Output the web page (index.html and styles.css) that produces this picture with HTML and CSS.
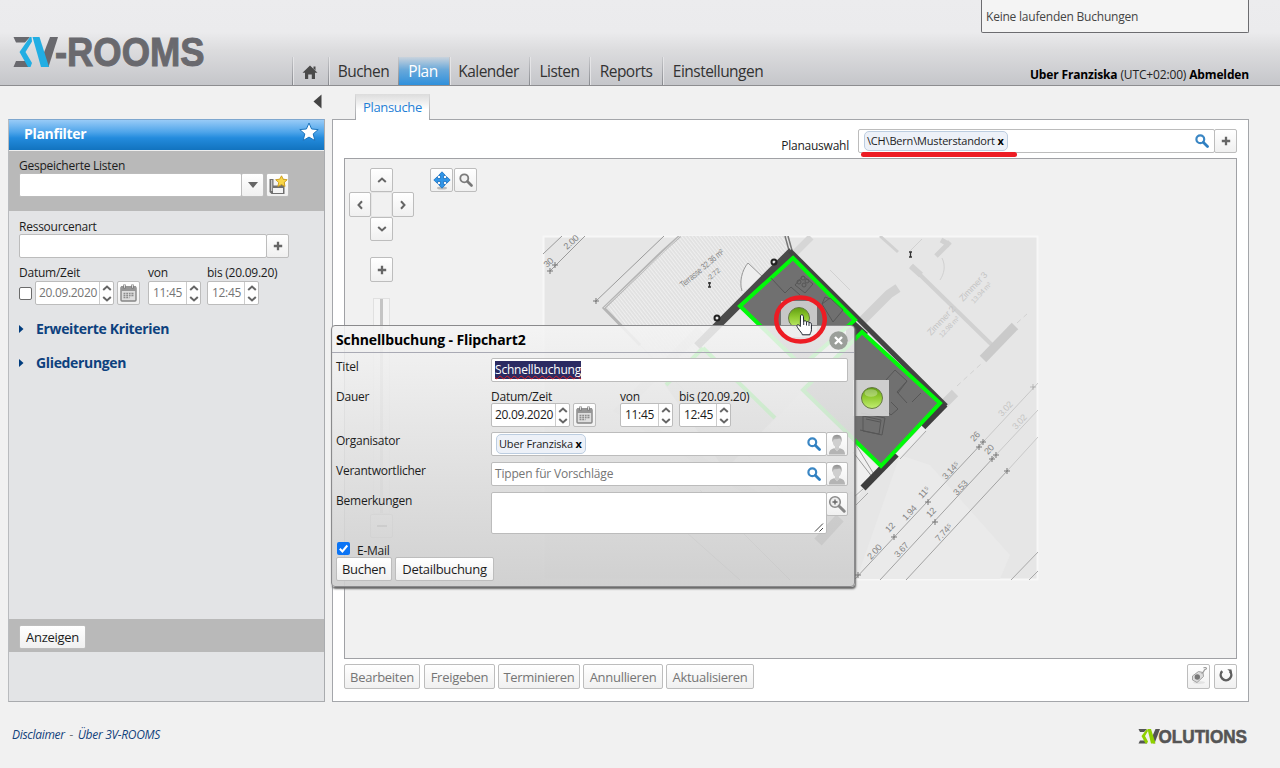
FILE: index.html
```html
<!DOCTYPE html>
<html lang="de">
<head>
<meta charset="utf-8">
<title>3V-ROOMS</title>
<link rel="stylesheet" href="styles.css">
</head>
<body>
<svg class="defs" width="0" height="0">
  <defs>
    <linearGradient id="pinG" x1="0" y1="0" x2="0" y2="1"><stop offset="0" stop-color="#5f9c10"/><stop offset=".45" stop-color="#8fc92f"/><stop offset="1" stop-color="#c2ee72"/></linearGradient>
    <linearGradient id="perG" x1="0" y1="0" x2="0" y2="1"><stop offset="0" stop-color="#909090"/><stop offset="1" stop-color="#c9c9c9"/></linearGradient>
    <symbol id="plus" viewBox="0 0 10 10"><path d="M5 .8v8.400M.8 5h8.400" stroke="#666" stroke-width="2.300"/></symbol>
    <symbol id="chev" viewBox="0 0 10 6"><path d="M1.200 5 5 1.500 8.800 5" fill="none" stroke="#666" stroke-width="2"/></symbol>
    <symbol id="lens" viewBox="0 0 14 14"><circle cx="5.300" cy="5.300" r="3.900" fill="#fff" stroke="#3a86c4" stroke-width="2.200"/><path d="M8.500 8.500l4 4" stroke="#2f7fc1" stroke-width="2.800" stroke-linecap="round"/></symbol>
    <symbol id="lensgrey" viewBox="0 0 14 14"><circle cx="5.300" cy="5.300" r="4" fill="#f2f2f2" stroke="#7c7c7c" stroke-width="1.800"/><path d="M8.500 8.500l4 4" stroke="#777" stroke-width="2.600" stroke-linecap="round"/></symbol>
    <symbol id="cal" viewBox="0 0 17 18"><rect x="1" y="3" width="15" height="14" rx="1" fill="#dedede" stroke="#858585" stroke-width="1.400"/><rect x="1" y="2" width="15" height="5" fill="#969696"/><path d="M4.500.5v4M12.500.5v4" stroke="#777" stroke-width="2.400"/><path d="M4.500.8v3M12.500.8v3" stroke="#ddd"/><path d="M3.500 9.500h10M3.500 11.500h10M3.500 13.500h6" stroke="#8d8d8d" stroke-width="1.400"/><path d="M5.800 8.500v6M8.500 8.500v6M11 8.500v4" stroke="#ececec" stroke-width=".7"/></symbol>
    <symbol id="person" viewBox="0 0 18 21"><path d="M1 20.500c0-4 2-5.500 5.500-6.200L9 17l2.500-2.700c3.500.7 5.500 2.200 5.500 6.200z" fill="#b4b4b4"/><path d="M7 12h4v3l-2 2.400-2-2.400z" fill="#ccc"/><ellipse cx="9" cy="7.500" rx="4.300" ry="5.500" fill="#cfcfcf"/><path d="M4.300 8.500C3.500 3.500 5.500.8 9 .8s5.600 2.700 4.700 7.700C13 6 12.500 5 11.500 4.600 9 5.800 6.500 5 5.600 5.800 5 6.500 4.900 7.500 4.300 8.500z" fill="url(#perG)"/></symbol>
  </defs>
</svg>

<header class="top">
  <svg class="logo" width="196" height="40" viewBox="0 0 196 40">
    <path d="M1.500 5H18L13 10.500H4zM1.500 35H18l-4-6H4z" fill="#69696e"/>
    <path d="M19.500 5H18L7.500 20 16 35h2.500l1.500-4-6.500-11L20 9.500z" fill="#22aee3"/>
    <path d="M38 5h8L36.500 35h-3L32 20.500z" fill="#69696e"/>
    <path d="M20.500 5h7L37 35h-8z" fill="#22aee3"/>
    <text x="43" y="34.300" textLength="149.500" lengthAdjust="spacingAndGlyphs" class="logotype">-ROOMS</text>
  </svg>
  <nav class="nav">
    <a class="home"><svg width="16" height="15" viewBox="0 0 16 15"><path d="M8 .5l7.500 7.300H13V14H9.800V9.500H6.200V14H3V7.800H.5L8 .5z" fill="#4a4a4a"/><path d="M11.500 1.500h2v4l-2-2z" fill="#4a4a4a"/></svg></a>
    <a class="n1">Buchen</a><a class="n2 on">Plan</a><a class="n3">Kalender</a><a class="n4">Listen</a><a class="n5">Reports</a><a class="n6">Einstellungen</a>
  </nav>
  <div class="user"><b>Uber Franziska</b> (UTC+02:00) <b>Abmelden</b></div>
  <div class="running">Keine laufenden Buchungen</div>
</header>

<main class="main">
  <aside class="left">
    <div class="fold"><svg width="9" height="15" viewBox="0 0 9 15"><path d="M8.500.5v14L.5 7.500z" fill="#444"/></svg></div>
    <section class="filter">
      <h2 class="bar">Planfilter<svg width="20" height="20" viewBox="0 0 20 20"><path d="M10 1l2.600 6 6.600.6-5 4.300 1.600 6.600L10 15.100l-5.800 3.400L5.800 11.900.8 7.600 7.400 7z" fill="#fff" stroke="#1b74bd" stroke-width="1"/></svg></h2>
      <div class="saved">
        <label class="lbl">Gespeicherte Listen</label>
        <div class="row">
          <span class="inp w223"></span><span class="btn sq"><svg width="10" height="6"><path d="M0 0h10L5 6z" fill="#666"/></svg></span>
          <span class="btn sq save"><svg width="20" height="21" viewBox="0 0 20 21"><path d="M1.500 4h15v15H3.500l-2-2z" fill="#707070"/><path d="M5.500 4h7v6.500h-7zM5 13h10v5H5z" fill="#f4f4f4"/><path d="M3 5h1.300v11H3z" fill="#c4c4c4"/><path d="M13.500.8l1.700 3.400 4 .5-3 2.800.8 4-3.500-1.900-3.600 1.900.8-4-3-2.800 4-.5z" fill="#f9d648" stroke="#c99a17" stroke-width=".9"/></svg></span>
        </div>
      </div>
      <div class="crit">
        <label class="lbl">Ressourcenart</label>
        <div class="row"><span class="inp w248"></span><span class="btn sq"><svg width="10" height="10"><use href="#plus"/></svg></span></div>
        <div class="dtl"><label class="c1">Datum/Zeit</label><label class="c2">von</label><label>bis (20.09.20)</label></div>
        <div class="row dt grey">
          <span class="chk"></span>
          <span class="spin date">20.09.2020<i><svg width="10" height="6"><use href="#chev"/></svg><svg class="flip" width="10" height="6"><use href="#chev"/></svg></i></span>
          <span class="btn sq cal"><svg width="17" height="18"><use href="#cal"/></svg></span>
          <span class="spin t1">11:45<i><svg width="10" height="6"><use href="#chev"/></svg><svg class="flip" width="10" height="6"><use href="#chev"/></svg></i></span>
          <span class="spin t2">12:45<i><svg width="10" height="6"><use href="#chev"/></svg><svg class="flip" width="10" height="6"><use href="#chev"/></svg></i></span>
        </div>
        <h3 class="acc"><svg width="5" height="8"><path d="M0 0l4.500 4L0 8z" fill="#003c7e"/></svg>Erweiterte Kriterien</h3>
        <h3 class="acc"><svg width="5" height="8"><path d="M0 0l4.500 4L0 8z" fill="#003c7e"/></svg>Gliederungen</h3>
      </div>
      <div class="show"><span class="btn">Anzeigen</span></div>
      <div class="rest"></div>
    </section>
  </aside>

  <section class="right">
    <div class="tabs"><span class="tab">Plansuche</span></div>
    <div class="panel">
      <div class="select">
        <label>Planauswahl</label>
        <span class="inp pick"><span class="tok">\CH\Bern\Musterstandort <b>x</b></span><svg width="14" height="14"><use href="#lens"/></svg></span><span class="btn sq"><svg width="10" height="10"><use href="#plus"/></svg></span>
        <i class="mark"></i>
      </div>
      <div class="canvas">
        <svg class="plan" width="891" height="499" viewBox="345 159 891 499">
          <defs>
            <pattern id="hatch" width="2.800" height="2.800" patternUnits="userSpaceOnUse" patternTransform="rotate(-38)"><rect width="2.800" height="2.800" fill="#efefef"/><path d="M1 0v2.800" stroke="#d2d2d2" stroke-width=".9"/></pattern>
            <clipPath id="sheet"><rect x="543" y="236" width="495" height="344"/></clipPath>
            <path id="x" d="M-3 0h6M0-3v6" stroke="#777"/>
          </defs>
          <rect x="543.500" y="236.500" width="494" height="343" fill="#e6e6e6" stroke="#f7f7f7" stroke-width="2"/>
          <g clip-path="url(#sheet)" fill="none">
            <path d="M858 575L900 455l30 10 80 90-10 24H855z" fill="#eaeaea"/>
            <path d="M604 308l76-72h109l2 17-76 75-37 42z" fill="url(#hatch)"/>
            <path d="M640 345l-36-37 59-57 17-15" stroke="#b5b5b5" stroke-width="3"/>
            <path d="M604 308l76-72" stroke="#ddd"/>
            <path d="M640 345l170 175 60-40" stroke="#d0d0d0"/>
            <path d="M543 254l19-18M550 271l35-35M595 302l69-66" stroke="#9a9a9a"/>
            <path d="M785 236l5 18M788 236l5 18" stroke="#777" stroke-width="1.500"/>
            <path d="M793 255l18-18" stroke="#d6d6d6" stroke-width="7"/>
            <path d="M748 263c-5 6-8 18-5 28l22-12z" fill="#eee"/><path d="M748 263c-6 7-9 19-6 28M748 263l17 16" stroke="#999"/>
            <!-- neighbouring flat -->
            <g stroke="#d1d1d1">
              <path d="M862 321l27-27 9-6" stroke-width="9"/>
              <path d="M911 266l81 79" stroke-width="4"/><path d="M911 266l10 9" stroke-width="6"/>
              <path d="M983 359l32-33" stroke-width="9" stroke="#cacaca"/><path d="M880 236l18 16" stroke-width="3"/>
              <path d="M936 256l14-14M941 240l9 5" stroke-width="5"/>
              <path d="M945 403l10-10" stroke-width="9"/>
              <path d="M957 386l24-22M1017 323l10-9" stroke-dasharray="5 4"/>
              <path d="M942 258c4 8 2 16-2 22M850 290l-20-20"/><path d="M922 239l-12 12"/>
            </g>
            <!-- lower flat under the form -->
            <path d="M700 330l-80 80 190 120" stroke="#bbb" stroke-width="9" opacity=".35"/>
            <path d="M703 348l72 70-50 52-60-85z" fill="#777" opacity=".35"/>
            <path d="M703 348l72 70M703 348l-37 37" stroke="#0f0" stroke-width="4"/>
            <path d="M818 542l22-24" stroke="#555" stroke-width="10"/>
            <path d="M650 500l90 80M700 490l90 90" stroke="#999"/>
            <path d="M803 390l75 77-20 30-90-70z" fill="#efefef"/>
            <path d="M823 395l58 72-12 14" stroke="#888"/><path d="M853 440l22 36M853 452l20 26" stroke="#999"/>
            <!-- outer walls -->
            <path d="M792 251L697 346" stroke="#4a4a4a" stroke-width="8"/>
            <path d="M790 251l156 155" stroke="#444" stroke-width="5"/>
            <path d="M945 404l-82 84" stroke="#3e3e3e" stroke-width="7"/>
            <path d="M923 427l-26 28" stroke="#eee" stroke-width="8"/>
            <path d="M926 431l-26 28M921 426l-26 28M863 489l-9 8M868 493l-12 12" stroke="#aaa"/>
            <path d="M846 313l22 20-14 15-8-8z" fill="#404040"/>
            <!-- booked rooms -->
            <path d="M793 258l62 62-53 46-62-60z" fill="#707070" stroke="#00fa08" stroke-width="4"/>
            <path d="M862 332l78 71-59 63-78-76z" fill="#707070" stroke="#00fa08" stroke-width="4"/>
            <g stroke="#565656">
              <path d="M771 278l14 15 6-6 9 8M795 285l8-9 10 8-8 9zM822 304l8-6 13 12-10 12zM822 304l3-7 5 2"/>
              <circle cx="799" cy="282" r="2"/><circle cx="804" cy="285" r="2"/><circle cx="807" cy="281" r="2"/><circle cx="803" cy="278" r="2"/>
              <path d="M886 380l9-10 12 11-9 12M907 381l-10 11 10 11M912 402l9-9M891 402l7 7-7 6-6-5M863 416l18 4-2 14-16-3zM866 419l14 3M861 413l24 5-3 17-22-5"/>
            </g>
            <circle cx="774" cy="262" r="2.500" stroke="#222" stroke-width="2"/><circle cx="717" cy="318" r="2.500" stroke="#222" stroke-width="2"/>
            <path d="M708 283h3M709.500 282v5M708 287h3M909 252h3M910.500 252v5M909 257h3" stroke="#333" stroke-width="1.300"/>
            <!-- dimension chains -->
            <path d="M855 579L985 440M880 580L994 457M906 580l102-110" stroke="#a2a2a2"/>
            <path d="M985 440l54-58M994 457l44-47M1008 470l30-33" stroke="#c8c8c8"/><path d="M1011 580l28-29M1029 580l9-9" stroke="#a8a8a8"/>
            <use href="#x" x="555" y="265"/><use href="#x" x="550" y="271"/><use href="#x" x="596" y="301"/><use href="#x" x="858" y="575"/><use href="#x" x="894" y="537"/><use href="#x" x="928" y="502"/><use href="#x" x="979" y="447"/><use href="#x" x="983" y="442"/><use href="#x" x="935" y="522"/><use href="#x" x="992" y="459"/><use href="#x" x="996" y="455"/><use href="#x" x="1007" y="471"/><use href="#x" x="1033" y="387" opacity=".4"/>
          </g>
          <g class="dim">
            <text transform="translate(567 250) rotate(-43)">2.00</text><text transform="translate(547 268) rotate(-43)">30</text>
            <text transform="translate(683 288) rotate(-40)" textLength="54" lengthAdjust="spacingAndGlyphs">Terrasse 32.36 m²</text>
            <text transform="translate(709 281) rotate(-40)" class="sm">-2.72</text>
            <text transform="translate(871 560) rotate(-47)">2.00</text><text transform="translate(898 558) rotate(-47)">3.67</text>
            <text transform="translate(889 533) rotate(-47)">12</text><text transform="translate(906 521) rotate(-47)">1.94</text>
            <text transform="translate(930 518) rotate(-47)">12</text><text transform="translate(922 499) rotate(-47)">11⁵</text>
            <text transform="translate(939 542) rotate(-47)">7.74⁵</text><text transform="translate(946 480) rotate(-47)">3.14⁵</text>
            <text transform="translate(957 496) rotate(-47)">3.53</text><text transform="translate(974 442) rotate(-47)">26</text><text transform="translate(988 455) rotate(-47)">20</text>
            <g class="pale"><text transform="translate(1002 417) rotate(-47)">3.02</text><text transform="translate(1016 430) rotate(-47)">3.02</text>
            <text transform="translate(963 302) rotate(-47)">Zimmer 3</text><text transform="translate(974 304) rotate(-47)" class="sm">13.94 m²</text>
            <text transform="translate(931 336) rotate(-47)">Zimmer 2</text><text transform="translate(942 338) rotate(-47)" class="sm">12.98 m²</text></g>
          </g>
          <rect x="781" y="301" width="36" height="36" fill="#d6d6d6" opacity=".85"/><circle cx="799" cy="318" r="10.500" fill="url(#pinG)" stroke="#667a45"/>
          <rect x="853" y="380" width="36" height="36" fill="#dedede" opacity=".85"/><circle cx="872" cy="398" r="10.500" fill="url(#pinG)" stroke="#667a45"/><ellipse cx="871" cy="393" rx="6.500" ry="3.800" fill="#fff" opacity=".3"/>
        </svg>
        <div class="ctl">
          <span class="btn up"><svg width="10" height="6"><use href="#chev"/></svg></span>
          <span class="btn lf"><svg width="10" height="6"><use href="#chev"/></svg></span><span class="mid"></span><span class="btn rt"><svg width="10" height="6"><use href="#chev"/></svg></span>
          <span class="btn dn"><svg width="10" height="6"><use href="#chev"/></svg></span>
          <span class="btn zin"><svg width="10" height="10"><use href="#plus"/></svg></span>
          <span class="rail"></span>
          <span class="btn zout"><svg width="10" height="10"><path d="M0 5h10" stroke="#666" stroke-width="2"/></svg></span>
        </div>
        <div class="tools">
          <span class="btn"><svg width="18" height="19" viewBox="0 0 18 19"><ellipse cx="9" cy="17" rx="5" ry="1.500" fill="#bbb"/><path d="M9 .8l3.500 3.700h-2V7.500h3v-2L17.200 9l-3.700 3.500v-2h-3v3h2L9 17.200l-3.500-3.700h2v-3h-3v2L.8 9l3.700-3.500v2h3V4.500h-2z" fill="#2f95e8" stroke="#1a70bf" stroke-width=".8"/></svg></span>
          <span class="btn"><svg width="14" height="14"><use href="#lensgrey"/></svg></span>
        </div>
      </div>
      <div class="acts grey">
        <span class="btn a1">Bearbeiten</span><span class="btn a2">Freigeben</span><span class="btn a3">Terminieren</span><span class="btn a4">Annullieren</span><span class="btn a5">Aktualisieren</span>
        <span class="btn ic push"><svg width="18" height="19" viewBox="0 0 18 19"><ellipse cx="9" cy="16.500" rx="6" ry="1.500" fill="#e2e2e2"/><path d="M2.500 10l6-4.500 4.500 1 .5 4-6.500 6-4.500-2.500z" fill="#dcdcdc" stroke="#999" stroke-width=".9"/><circle cx="7.300" cy="11" r="2.700" fill="#777"/><path d="M11.500 7.500c2.500-1 2-2.500 3-3.500s2-.5 2-1.500-2-1.500-3-.5" fill="none" stroke="#999" stroke-width="1.100"/></svg></span>
        <span class="btn ic last"><svg width="14" height="14" viewBox="0 0 14 14"><path d="M3.200 2.200A5.300 5.300 0 1 0 10.800 2.200" fill="none" stroke="#5e5e5e" stroke-width="2.500"/><path d="M8.300.2l4.200.3.500 4z" fill="#5e5e5e"/></svg></span>
      </div>
    </div>
  </section>
</main>

<footer class="foot">
  <div class="links">Disclaimer <span>-</span> Über 3V-ROOMS</div>
  <svg width="112" height="24" viewBox="0 0 112 24">
    <path d="M1.500 5H10L7 8H3zM1.500 19.500H10l-2-3H3z" fill="#555"/>
    <path d="M10 5L4.500 12l4 7.500H10l1-2L8 12l3-5z" fill="#8fd000"/><path d="M18.500 5H23L17.500 19.500h-1L15 13z" fill="#555"/><path d="M10.500 5H14L18.500 19.500H14z" fill="#8fd000"/>
    <text x="21.500" y="19.200" textLength="88.500" lengthAdjust="spacingAndGlyphs" class="voltype">OLUTIONS</text>
  </svg>
</footer>

<div class="dialog">
  <h1 class="dhead">Schnellbuchung - Flipchart2<svg width="19" height="19" viewBox="0 0 19 19"><circle cx="9.500" cy="9.500" r="9.300" fill="#9b9f9a"/><path d="M6 6l7 7M13 6l-7 7" stroke="#fff" stroke-width="2.400"/></svg></h1>
  <div class="form">
    <label>Titel</label><span class="inp f"><span class="sel">Schnellbuchung</span></span>
    <label>Dauer</label>
    <div class="dauer">
      <div class="dtl"><label class="c1">Datum/Zeit</label><label class="c2">von</label><label>bis (20.09.20)</label></div>
      <div class="row dt">
        <span class="spin date">20.09.2020<i><svg width="10" height="6"><use href="#chev"/></svg><svg class="flip" width="10" height="6"><use href="#chev"/></svg></i></span>
        <span class="btn sq cal"><svg width="17" height="18"><use href="#cal"/></svg></span>
        <span class="spin t1">11:45<i><svg width="10" height="6"><use href="#chev"/></svg><svg class="flip" width="10" height="6"><use href="#chev"/></svg></i></span>
        <span class="spin t2">12:45<i><svg width="10" height="6"><use href="#chev"/></svg><svg class="flip" width="10" height="6"><use href="#chev"/></svg></i></span>
      </div>
    </div>
    <label>Organisator</label>
    <div class="row"><span class="inp w335 pick"><span class="tok">Uber Franziska <b>x</b></span><svg width="14" height="14"><use href="#lens"/></svg></span><span class="btn sq"><svg width="18" height="21"><use href="#person"/></svg></span></div>
    <label>Verantwortlicher</label>
    <div class="row"><span class="inp w335 pick hint">Tippen für Vorschläge<svg width="14" height="14"><use href="#lens"/></svg></span><span class="btn sq"><svg width="18" height="21"><use href="#person"/></svg></span></div>
    <label>Bemerkungen</label>
    <div class="row"><span class="inp area"><svg width="10" height="9"><path d="M1 8.500L9 .5M5.500 8.500L9 5" stroke="#444"/></svg></span><span class="btn sq"><svg width="18" height="18" viewBox="0 0 18 18"><circle cx="7" cy="7" r="5.300" fill="#eee" stroke="#8c8c8c" stroke-width="1.600"/><path d="M7 4.500v5M4.500 7h5" stroke="#666" stroke-width="1.400"/><path d="M11.200 11.200l5 5" stroke="#888" stroke-width="3" stroke-linecap="round"/></svg></span></div>
  </div>
  <div class="mail"><svg width="13" height="13"><rect width="13" height="13" rx="2" fill="#0b74f5"/><path d="M2.800 6.800l2.600 2.700L10.300 3.500" fill="none" stroke="#fff" stroke-width="2"/></svg><span>E-Mail</span></div>
  <div class="dbtn"><span class="btn b1">Buchen</span><span class="btn b2">Detailbuchung</span></div>
</div>

<svg class="pointer" width="54" height="52" viewBox="773 294 54 52">
  <ellipse cx="800.500" cy="319.500" rx="24.300" ry="22" fill="none" stroke="#ed1c24" stroke-width="4.500"/>
  <path d="M800.500 315.500c1-1.200 2.800-.8 2.900.8l.3 5c1.200-1 2.500-.5 2.800.6 1-.6 2.300-.2 2.500.8 1.300-.5 2.400.3 2.400 1.600v5.500c0 2-1.200 3.200-1.500 5h-7.500c-.5-2-2.500-3.500-4-6-1-1.600-2-2.700-1.400-3.600.8-1 2.200-.2 3.300 1.300z" fill="#fff" stroke="#1a1f2a" stroke-width="1"/>
  <path d="M803.700 321v4M806.500 322v3.500M809 323v3" stroke="#1a1f2a" stroke-width=".9"/>
</svg>
</body>
</html>
```
FILE: styles.css
```css
* { box-sizing: border-box; }
html, body { margin: 0; height: 768px; overflow: hidden; }
body { background: #f1f1f1; font: 12px/16px "Open Sans", "Noto Sans", sans-serif; letter-spacing: -.24px; color: #1c1c1c; position: relative; display: flex; flex-direction: column; }
h1, h2, h3 { margin: 0; font-size: 14px; font-weight: 700; }
svg { display: block; flex: none; }
.defs { position: absolute; }

/* header */
.top { height: 86px; flex: none; display: flex; align-items: flex-end; padding: 0 31px 0 12px; border-bottom: 1px solid #8d8d90; background: linear-gradient(#ececee 0, #ebebed 32px, #dcdcde 50px, #c5c6ca 100%); position: relative; }
.logo { margin-bottom: 13px; overflow: visible; }
.logotype { font: 700 40px "Liberation Sans", Arial, sans-serif; fill: #69696e; stroke: #69696e; stroke-width: 1px; letter-spacing: 0; }
.nav { display: flex; height: 28px; margin-left: 84px; font-size: 15.500px; line-height: 26px; letter-spacing: -.52px; color: #333; }
.nav a { display: flex; justify-content: center; align-items: center; border-left: 1px solid; border-image: linear-gradient(#c9cacd, #85878c) 1; box-shadow: inset 1px 0 #e4e4e6; white-space: nowrap; }
.home { width: 36px; }
.nav .home { padding: 3px 2px 0 0; }
.n1 { width: 70px; }
.n2 { width: 51px; }
.n3 { width: 80px; }
.n4 { width: 60px; }
.n5 { width: 73px; }
.n6 { width: 111px; }
.nav .on { color: #fff; background: linear-gradient(#c9d3dd, #6aa9da 45%, #2f90dc); box-shadow: none; padding-right: 2px; }
.nav .n3 { padding-right: 2px; }
.user { margin-left: auto; padding-bottom: 2px; color: #222; white-space: nowrap; letter-spacing: -.15px; }
.user b { color: #000; }
.running { position: absolute; left: 981px; top: 0; width: 268px; height: 33px; padding: 9px 4px; border: 1px solid #6c6c70; border-top: 0; background: #f4f4f4; color: #444; border-radius: 0 0 2px 2px; letter-spacing: -.22px; }

/* frame */
.main { display: flex; gap: 7px; padding: 0 31px 0 8px; height: 616px; flex: none; }
.left { width: 317px; display: flex; flex-direction: column; }
.fold { height: 33px; padding: 8px 3px 0 0; display: flex; justify-content: flex-end; }
.filter { flex: 1; display: flex; flex-direction: column; border: 1px solid #a9abae; border-left-color: #b9bbbe; border-top-color: #7ea7cf; background: #e3e4e6; }
.bar { height: 31px; padding: 0 5px 2px 15px; display: flex; align-items: center; justify-content: space-between; color: #fff; letter-spacing: -.3px; background: linear-gradient(#98cbf7, #4fa5ea 40%, #238bdd 60%, #1273bf); border-bottom: 1px solid #eee; }
.bar svg { margin-top: -4px; }
.saved { height: 60px; background: #b9b9b9; padding: 7px 0 0 10px; }
.lbl { display: block; }
.row { display: flex; }
.inp { height: 24px; background: #fff; border: 1px solid #bcbcbc; border-radius: 2px; display: flex; align-items: center; }
.w223 { width: 223px; }
.w248 { width: 248px; }
.w335 { width: 336px; }
.btn { height: 24px; border: 1px solid #bdbdbd; border-radius: 2px; background: linear-gradient(#fff, #f0f0f0); display: flex; align-items: center; justify-content: center; font-size: 13px; letter-spacing: -.29px; white-space: nowrap; }
.sq { width: 23px; margin-left: -1px; }
.save { margin-left: 2px; }
.grey { color: #757575; }
.crit { flex: 1; padding: 8px 0 0 10px; }
.crit > .row:not(.dt) { margin-top: -1px; }
.saved .row { margin-top: -1px; }
.dtl { display: flex; margin-top: 7px; color: #1c1c1c; }
.c1 { width: 129px; }
.c2 { width: 59px; }
.dt { align-items: center; }
.spin { height: 24px; background: #fff; border: 1px solid #bcbcbc; border-radius: 2px; display: flex; justify-content: space-between; align-items: center; padding-left: 4px; letter-spacing: -.32px; }
.spin i { width: 14px; height: 100%; border-left: 1px solid #ccc; display: flex; flex-direction: column; align-items: center; justify-content: center; gap: 5px; }
.flip { transform: rotate(180deg); }
.date { width: 79px; padding-left: 3px; }
.t1 { width: 53px; margin-left: 8px; }
.t2 { width: 52px; margin-left: 6px; }
.dt .cal { margin-left: 3px; width: 23px; }
.chk { width: 13px; height: 13px; border: 1px solid #6b6b6b; border-radius: 2px; background: #fff; margin-right: 3px; }
.acc { display: flex; align-items: center; gap: 12px; color: #0d417e; letter-spacing: -.34px; height: 16px; margin-top: 18px; }
.crit .dt + .acc { margin-top: 16px; }
.show { height: 33px; background: #b9b9b9; padding: 6px 0 0 10px; display: flex; }
.show .btn { width: 67px; }
.rest { height: 49px; }

/* plan */
.right { flex: 1; display: flex; flex-direction: column; }
.tabs { height: 34px; padding: 8px 0 0 23px; display: flex; position: relative; z-index: 1; }
.tab { height: 26px; width: 75px; margin-bottom: -1px; border: 1px solid #a9abae; border-width: 0 1px; background: linear-gradient(#dcdcdc, #fff 60%); color: #1f7fd6; font-size: 13px; letter-spacing: -.35px; display: flex; justify-content: center; align-items: center; border-image: linear-gradient(#ddd, #a0a2a6) 1; border-image-width: 0 1px; }
.panel { flex: 1; border: 1px solid #a4a6aa; margin-top: -1px; background: #fff; padding: 9px 11px 0; }
.select { height: 29px; display: flex; justify-content: flex-end; position: relative; }
.select label { margin: 9px 9px 0 0; }
.pick { justify-content: space-between; padding: 0 5px 0 4px; }
.select .pick { width: 357px; padding-left: 5px; }
.tok { height: 20px; border: 1px solid #bccde0; background: #edf1f8; border-radius: 5px; font-size: 11px; line-height: 17px; padding: 0 3px 0 2px; letter-spacing: -.18px; white-space: nowrap; }
.tok b { color: #000; }
.mark { position: absolute; left: 517px; top: 23px; width: 156px; height: 5px; border-radius: 3px; background: #ed1c24; }
.canvas { height: 501px; border: 1px solid #a0a1a5; background: #f1f1f1; position: relative; overflow: hidden; }
.dim { font: 9px "Liberation Sans", Arial, sans-serif; fill: #848484; letter-spacing: -.2px; }
.sm { font-size: 7px; }
.pale { fill: #c4c4c4; }
.ctl { position: absolute; left: 4px; top: 9px; display: grid; grid-template-columns: 22px 21px 22px; grid-template-rows: 24px 25px 24px 16px 25px 16px 216px 24px; justify-items: center; }
.up, .dn, .zin, .rail, .zout { grid-column: 2; }
.up, .dn, .zin, .zout { width: 23px; }
.lf, .rt { width: 22px; }
.lf, .rt, .zin { height: 25px; }
.mid { width: 21px; border: 1px solid #e6e6e6; grid-row: 2; grid-column: 2; }
.lf { grid-row: 2; grid-column: 1; }
.rt { grid-row: 2; grid-column: 3; }
.dn { grid-row: 3; }
.zin { grid-row: 5; }
.rail { grid-row: 7; width: 17px; border: 1px solid #e0e0e0; background: linear-gradient(90deg, #f4f4f4 6px, #c4c4c4 6px, #c4c4c4 9px, #f4f4f4 9px); }
.zout { grid-row: 8; }
.lf svg { transform: rotate(-90deg); }
.rt svg { transform: rotate(90deg); }
.dn svg { transform: rotate(180deg); }
.tools { position: absolute; left: 85px; top: 9px; display: flex; gap: 1px; }
.tools .btn { width: 23px; }
.acts { display: flex; gap: 3px; margin-top: 5px; }
.acts .btn { height: 25px; }
.a1 { width: 76px; margin-right: 1px; }
.a2 { width: 71px; }
.a3 { width: 82px; }
.a4 { width: 80px; }
.a5 { width: 88px; }
.ic { width: 23px; }
.push { margin-left: auto; }
.last { margin-left: 1px; }
.ic svg { margin-bottom: 2px; }

/* footer */
.foot { display: flex; justify-content: space-between; padding: 22px 31px 0 12px; }
.links { font-style: italic; font-size: 12px; letter-spacing: -.3px; color: #11427c; padding-top: 3px; white-space: nowrap; }
.links span { margin: 0 2px; color: #777; }
.voltype { font: 700 19px "Liberation Sans", Arial, sans-serif; fill: #555; stroke: #555; stroke-width: .6px; letter-spacing: 0; }

/* booking dialog */
.dialog { position: absolute; left: 331px; top: 325px; width: 524px; height: 262px; border: 1px solid #8a8a8c; border-radius: 4px; background: linear-gradient(rgba(244, 244, 244, .88), rgba(206, 206, 206, .92)); box-shadow: 1px 2px 2px #666; }
.dhead { height: 27px; padding: 2px 6px 0 4px; display: flex; justify-content: space-between; align-items: center; color: #000; letter-spacing: -.13px; border-bottom: 1px solid #a9aab4; }
.form { display: grid; grid-template-columns: 155px 357px; padding: 5px 0 0 4px; grid-template-rows: 30px 44px 30px 30px 50px; }
.form > label { padding-top: 1px; }
.form .f { width: 357px; padding-left: 3px; }
.sel { background: #2b2b62; color: #fff; text-decoration: underline wavy #e02020 1px; text-underline-offset: 1px; text-decoration-skip-ink: none; line-height: 18px; height: 18px; letter-spacing: -.2px; }
.dauer .dtl { margin-top: 1px; height: 14px; }
.dialog .t1 { margin-left: 24px; }
.dialog .sq:not(.cal) { width: 22px; }
.hint { color: #757575; letter-spacing: -.18px; padding-left: 3px; }
.area { width: 336px; height: 42px; align-items: flex-end; justify-content: flex-end; padding: 1px 2px; }
.mail { display: flex; gap: 7px; padding: 0 0 0 5px; height: 15px; }
.mail span { padding-top: 1px; }
.dbtn { display: flex; gap: 3px; padding-left: 4px; }
.b1 { width: 56px; }
.b2 { width: 99px; }

/* pointer highlight */
.pointer { position: absolute; left: 773px; top: 294px; }
```
